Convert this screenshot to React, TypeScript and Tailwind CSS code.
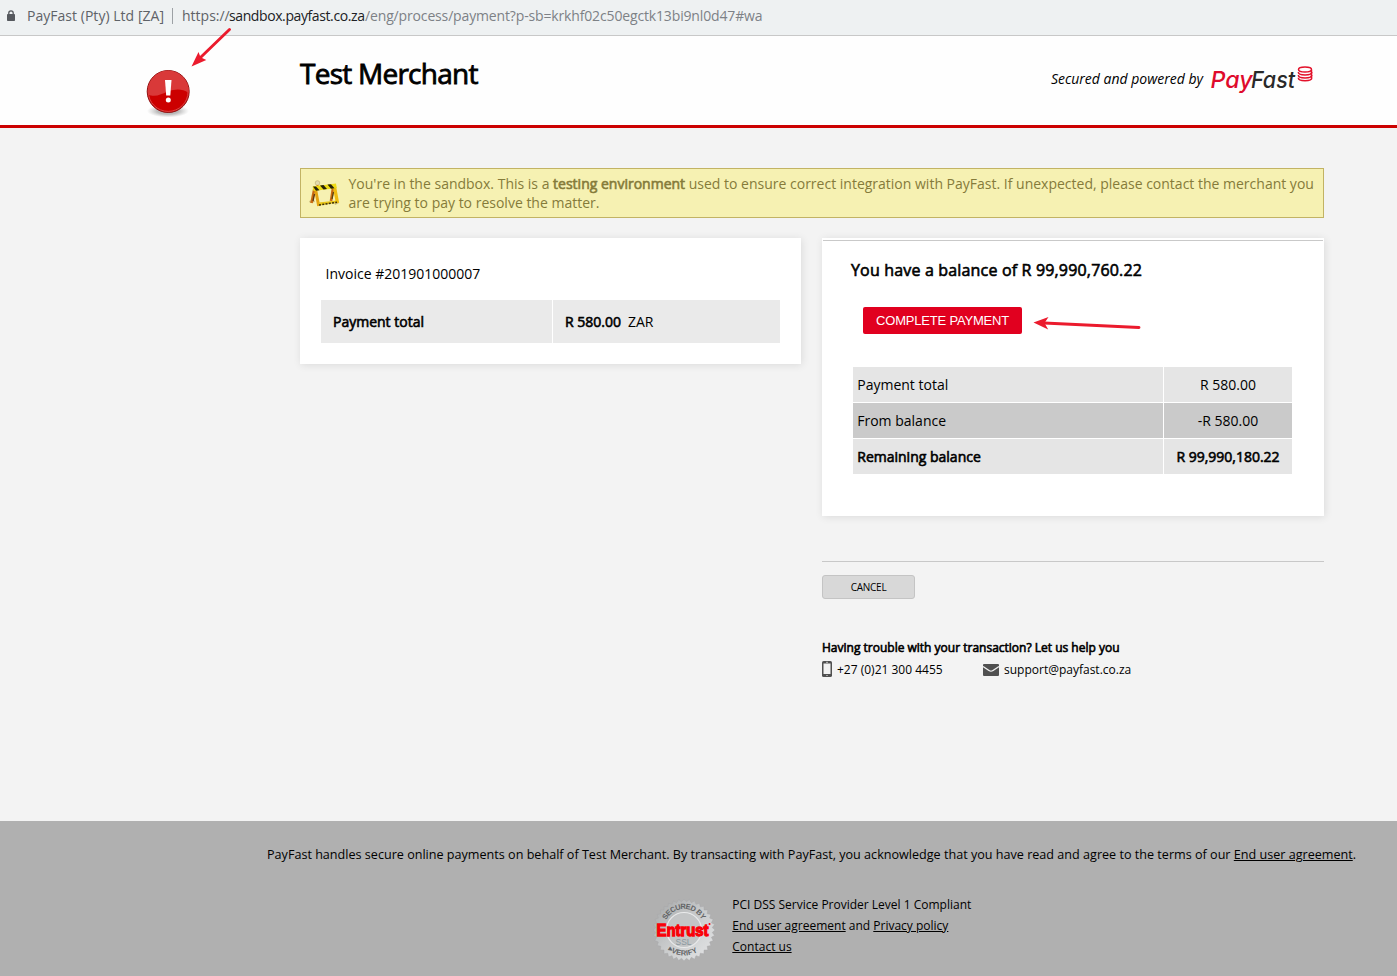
import React from "react";

const seal = Array.from({ length: 72 }, (_, i) => {
  const r = i % 2 === 0 ? 31 : 28.3;
  const a = (i / 72) * Math.PI * 2;
  return `${(32 + r * Math.cos(a)).toFixed(2)},${(32 + r * Math.sin(a)).toFixed(2)}`;
}).join(" ");

function AddressBar() {
  return (
    <div className="flex h-9 items-center border-b border-[#c8c8c8] bg-[#eef1f2] pb-1 text-[14px] whitespace-nowrap text-[#5f6368]">
      <svg className="ml-[7px] h-[11px] w-2" viewBox="0 0 8 11">
        <path d="M1.8 4.5V3a2.2 2.2 0 0 1 4.4 0v1.5" fill="none" stroke="#56595e" strokeWidth="1.3" />
        <rect x="0" y="4" width="8" height="7" rx="0.8" fill="#56595e" />
      </svg>
      <span className="ml-3 w-[145px] tracking-[0.03px]">PayFast (Pty) Ltd [ZA]</span>
      <span className="h-4 w-px bg-[#9da1a5]" />
      <span className="ml-[9px] text-[#7d8186]">
        <span className="inline-block w-[47px] text-[#5f6368]">https://</span>
        <span className="inline-block w-[136px] tracking-[-0.4px] text-[#202124]">sandbox.payfast.co.za</span>
        <span className="tracking-[-0.15px]">/eng/process/payment?p-sb=krkhf02c50egctk13bi9nl0d47#wa</span>
      </span>
    </div>
  );
}

function Logo() {
  return (
    <svg className="h-[30px] w-[104px]" viewBox="0 0 104 30">
      <g fontFamily="Inter, sans-serif" fontSize="23" fontStyle="italic" fontWeight="500">
        <text x="0.500" y="22.800" textLength="42" lengthAdjust="spacingAndGlyphs" fill="#df0a2c">Pay</text>
        <text x="41" y="22.800" textLength="44" lengthAdjust="spacingAndGlyphs" fill="#292929">Fast</text>
      </g>
      <g fill="none" stroke="#e3122b" strokeWidth="1.5">
        <ellipse cx="95" cy="4.600" rx="6.500" ry="2.500" />
        <path d="M88.300 7c0 4 13.500 4 13.500 0M88.300 9.900c0 4 13.500 4 13.500 0M88.300 12.800c0 4 13.500 4 13.500 0" />
        <path d="M101.500 5v8" />
      </g>
    </svg>
  );
}

function AlertBadge() {
  return (
    <svg className="absolute top-[69px] left-[144px] h-[50px] w-12" viewBox="0 0 48 50">
      <defs>
        <radialGradient id="shade">
          <stop offset="0.5" stopColor="#777" stopOpacity="0.5" />
          <stop offset="1" stopColor="#999" stopOpacity="0" />
        </radialGradient>
      </defs>
      <ellipse cx="24" cy="42" rx="21" ry="6.500" fill="url(#shade)" />
      <circle cx="24.200" cy="22.500" r="21" fill="#cc0000" stroke="#8f1515" strokeWidth="1" />
      <circle cx="24.200" cy="22.500" r="19.900" fill="none" stroke="#dd4444" strokeWidth="1" />
      <path d="M4.200 25.500C11.200 29 17.200 25 24.200 22.500S38.200 19.500 44.600 24A20.400 20.400 0 1 0 4.200 25.500Z" fill="#d93939" />
      <path d="M21 11h6.500l-1.200 15.500h-4.100z" fill="#fff" />
      <circle cx="24.300" cy="31" r="2.500" fill="#fff" />
    </svg>
  );
}

function Barrier() {
  return (
    <svg className="h-[28px] w-[31px]" viewBox="0 0 31 28">
      <circle cx="8.500" cy="3" r="2.300" fill="#e3dcae" stroke="#b8a76b" strokeWidth=".6" />
      <path d="M7.500 5h2v2h-2z" fill="#d98310" />
      <path d="M0 21l5-1 1 2-5 1zM25 22l5-1v2l-4 2z" fill="#a08a45" opacity=".5" />
      <path d="M5.500 8L2.500 23" stroke="#c9690f" strokeWidth="2.600" />
      <path d="M6.500 9l3.200 17" stroke="#e5a30f" strokeWidth="3" />
      <path d="M5.500 14L4 21" stroke="#5b3510" strokeWidth="1.300" />
      <path d="M24 8l-2 13" stroke="#c9690f" strokeWidth="2.600" />
      <path d="M25.500 7l3 16" stroke="#f0bd10" strokeWidth="3.400" />
      <path d="M24.500 12l-1.500 7" stroke="#5a410c" strokeWidth="1.200" />
      <path d="M3.500 6.500L27 3.500l.8 4.500L4.500 11z" fill="#eedb16" />
      <path d="M4 6.500h3l3.500 3.800-3.500.500zM11 5.500l3.500-.4 3.500 4-3.500.500zM18.500 4.600l3.500-.4 3.500 4-3.500.500z" fill="#282309" />
      <path d="M9.500 22.500L28 20.500v2.300l-18 2.700z" fill="#e6c318" />
      <path d="M10 25l18-2.800" stroke="#3a2e0c" strokeWidth="1.500" strokeDasharray="2 1.300" />
    </svg>
  );
}

function Seal() {
  return (
    <svg className="h-16 w-16" viewBox="0 0 64 64" fontFamily="Liberation Sans, sans-serif">
      <defs>
        <linearGradient id="metal" x1="0" y1="0" x2="1" y2="1">
          <stop offset="0" stopColor="#a5a7a8" />
          <stop offset=".5" stopColor="#c9cbcc" />
          <stop offset="1" stopColor="#e6e7e8" />
        </linearGradient>
        <path id="topArc" d="M12 31a20 20 0 0 1 40 0" />
        <path id="bottomArc" d="M5.500 31a26.500 26.500 0 0 0 53 0" />
      </defs>
      <polygon points={seal} fill="url(#metal)" stroke="#a3a5a6" strokeWidth=".4" />
      <circle cx="32" cy="32" r="17.500" fill="#c3c5c6" stroke="#e9eaeb" strokeWidth="1.200" />
      <text fontSize="7.500" fontWeight="bold" fill="#626466">
        <textPath href="#topArc" startOffset="50%" textAnchor="middle" textLength="44">SECURED BY</textPath>
      </text>
      <text fontSize="7.500" fontWeight="bold" fill="#626466">
        <textPath href="#bottomArc" startOffset="48%" textAnchor="middle" textLength="32">▸VERIFY</textPath>
      </text>
      <text x="23.500" y="47" fontSize="8.500" fill="#8b989f" textLength="16" lengthAdjust="spacingAndGlyphs">SSL</text>
      <text x="4.500" y="37.500" fontSize="16.500" fontWeight="bold" fill="#fa0008" stroke="#fa0008" strokeWidth="1.300" textLength="52" lengthAdjust="spacingAndGlyphs">Entrust</text>
      <circle cx="57.500" cy="26" r="1" fill="#fa0008" />
    </svg>
  );
}

function Arrows() {
  return (
    <>
      <svg className="absolute top-[26px] left-[188px] h-11 w-12" viewBox="0 0 48 44">
        <path d="M41.500 3.500L13 31" stroke="#eb1b2d" strokeWidth="2.900" strokeLinecap="round" />
        <path d="M3.500 40.500L10.500 26l2 5.200 5.800 2.900z" fill="#eb1b2d" />
      </svg>
      <svg className="absolute top-[314px] left-[1032px] h-[18px] w-[110px]" viewBox="0 0 110 18">
        <path d="M107 13.500L12 9" stroke="#eb1b2d" strokeWidth="2.900" strokeLinecap="round" />
        <path d="M1.500 8.500L16.500 3 12.500 9l3.700 6.500z" fill="#eb1b2d" />
      </svg>
    </>
  );
}

const rows = [
  { label: "Payment total", value: "R 580.00", style: "bg-[#e5e5e5]" },
  { label: "From balance", value: "-R 580.00", style: "bg-[#cacaca]" },
  { label: "Remaining balance", value: "R 99,990,180.22", style: "bg-[#e5e5e5] [-webkit-text-stroke:0.6px_#000]" },
];

export default function App() {
  return (
    <div className="relative flex h-[976px] w-[1397px] flex-col overflow-hidden bg-[#f3f3f3] font-['Open_Sans',sans-serif] text-[14px] leading-[19px] text-black">
      <AddressBar />
      <header className="flex h-[92px] items-start justify-between border-b-[3px] border-[#cc0000] bg-[#fefefe] pr-[83px] pl-[300px]">
        <h1 className="mt-[18px] text-[28px] leading-[38px] tracking-[-0.75px] [-webkit-text-stroke:0.8px_#000]">Test Merchant</h1>
        <div className="mt-[29px] flex items-start">
          <span className="mt-1 mr-[7px] italic">Secured and powered by</span>
          <Logo />
        </div>
      </header>

      <main className="flex h-[693px] flex-col pt-10 pr-[73px] pl-[300px]">
        <div className="flex h-[50px] shrink-0 border border-[#c2b364] bg-[#f6f1b2] pt-[5px] pl-2 text-[#857b3a]">
          <div className="mt-[6px] mr-[8.500px] w-[31px]"><Barrier /></div>
          <p className="whitespace-nowrap">
            You're in the sandbox. This is a <span className="[-webkit-text-stroke:0.6px_#857b3a]">testing environment</span> used to ensure correct integration with PayFast. If unexpected, please contact the merchant you
            <br />
            are trying to pay to resolve the matter.
          </p>
        </div>

        <div className="mt-5 flex items-start gap-[21px]">
          <section className="h-[126px] w-[501px] bg-white px-[21px] pt-[26px] shadow-[1px_1px_8px_rgba(0,0,0,0.1)]">
            <h2 className="pl-[4.500px]">Invoice #201901000007</h2>
            <div className="mt-[17px] flex h-[43px] gap-px">
              <div className="flex w-[231px] items-center bg-[#eaeaea] pl-3 [-webkit-text-stroke:0.6px_#000]">Payment total</div>
              <div className="flex flex-1 items-center bg-[#eaeaea] pl-3">
                <span className="[-webkit-text-stroke:0.6px_#000]">R 580.00</span>
                <span className="ml-[7px]">ZAR</span>
              </div>
            </div>
          </section>

          <div className="w-[502px]">
            <section className="h-[278px] bg-white px-px pt-[2px] shadow-[1px_1px_8px_rgba(0,0,0,0.1)]">
              <div className="h-[276px] border-t border-[#c9c9c9] pt-[18px] pr-[31px] pl-[30px]">
                <h2 className="-ml-[2px] text-[16px] leading-[22px] tracking-[0.17px] [-webkit-text-stroke:0.6px_#000]">You have a balance of R 99,990,760.22</h2>
                <button className="mt-[26px] ml-[10px] block h-[27px] w-[159px] rounded-[2px] bg-[#e1001f] font-['Liberation_Sans',sans-serif] text-[13px] leading-[27px] tracking-[-0.2px] whitespace-nowrap text-white">COMPLETE PAYMENT</button>
                <div className="mt-[33px] flex flex-col gap-px">
                  {rows.map((r) => (
                    <div key={r.label} className="flex h-[35px] gap-px whitespace-nowrap">
                      <div className={`flex w-[310px] items-center pl-[4.250px] ${r.style}`}>{r.label}</div>
                      <div className={`flex flex-1 items-center justify-center ${r.style}`}>{r.value}</div>
                    </div>
                  ))}
                </div>
              </div>
            </section>
            <hr className="mt-[45px] border-t border-[#c8c8c8]" />
            <button className="mt-[13px] block h-6 w-[93px] rounded-[3px] border border-[#c4c4c4] bg-[#d8d8d8] text-[10px] leading-[22px] tracking-[-0.25px]">CANCEL</button>
            <h3 className="mt-[39px] text-[12px] leading-[19px] [-webkit-text-stroke:0.6px_#000]">Having trouble with your transaction? Let us help you</h3>
            <div className="mt-[3px] flex items-center text-[12px]">
              <svg className="-mt-px h-4 w-[10px]" viewBox="0 0 10 16">
                <rect width="10" height="16" rx="1.600" fill="#505050" />
                <rect x="1.500" y="2.500" width="7" height="10.500" fill="#f2f2f2" />
                <path d="M4 1.300h2M4.300 14.500h1.400" stroke="#ddd" strokeWidth=".8" />
              </svg>
              <span className="ml-[5px] w-[146px]">+27 (0)21 300 4455</span>
              <svg className="h-3 w-4" viewBox="0 0 16 12">
                <path d="M0 1Q0 0 1 0h14q1 0 1 1v10q0 1-1 1H1q-1 0-1-1z" fill="#505050" />
                <path d="M0 2.500l6 4q2 1.300 4 0l6-4" fill="none" stroke="#f2f2f2" strokeWidth="1.400" />
              </svg>
              <span className="ml-[5px]">support@payfast.co.za</span>
            </div>
          </div>
        </div>
      </main>

      <footer className="flex-1 bg-[#b0b0b0] text-[12px]">
        <p className="mt-6 ml-[267px] text-[12.600px] whitespace-nowrap">
          PayFast handles secure online payments on behalf of Test Merchant. By transacting with PayFast, you acknowledge that you have read and agree to the terms of our <u>End user agreement</u>.
        </p>
        <div className="mt-[30px] ml-[652px] flex items-start">
          <div className="mt-1"><Seal /></div>
          <div className="ml-4 pl-[0.300px] leading-[21px]">
            <p>PCI DSS Service Provider Level 1 Compliant</p>
            <p><u>End user agreement</u> and <u>Privacy policy</u></p>
            <p><u>Contact us</u></p>
          </div>
        </div>
      </footer>
      <AlertBadge />
      <Arrows />
    </div>
  );
}
